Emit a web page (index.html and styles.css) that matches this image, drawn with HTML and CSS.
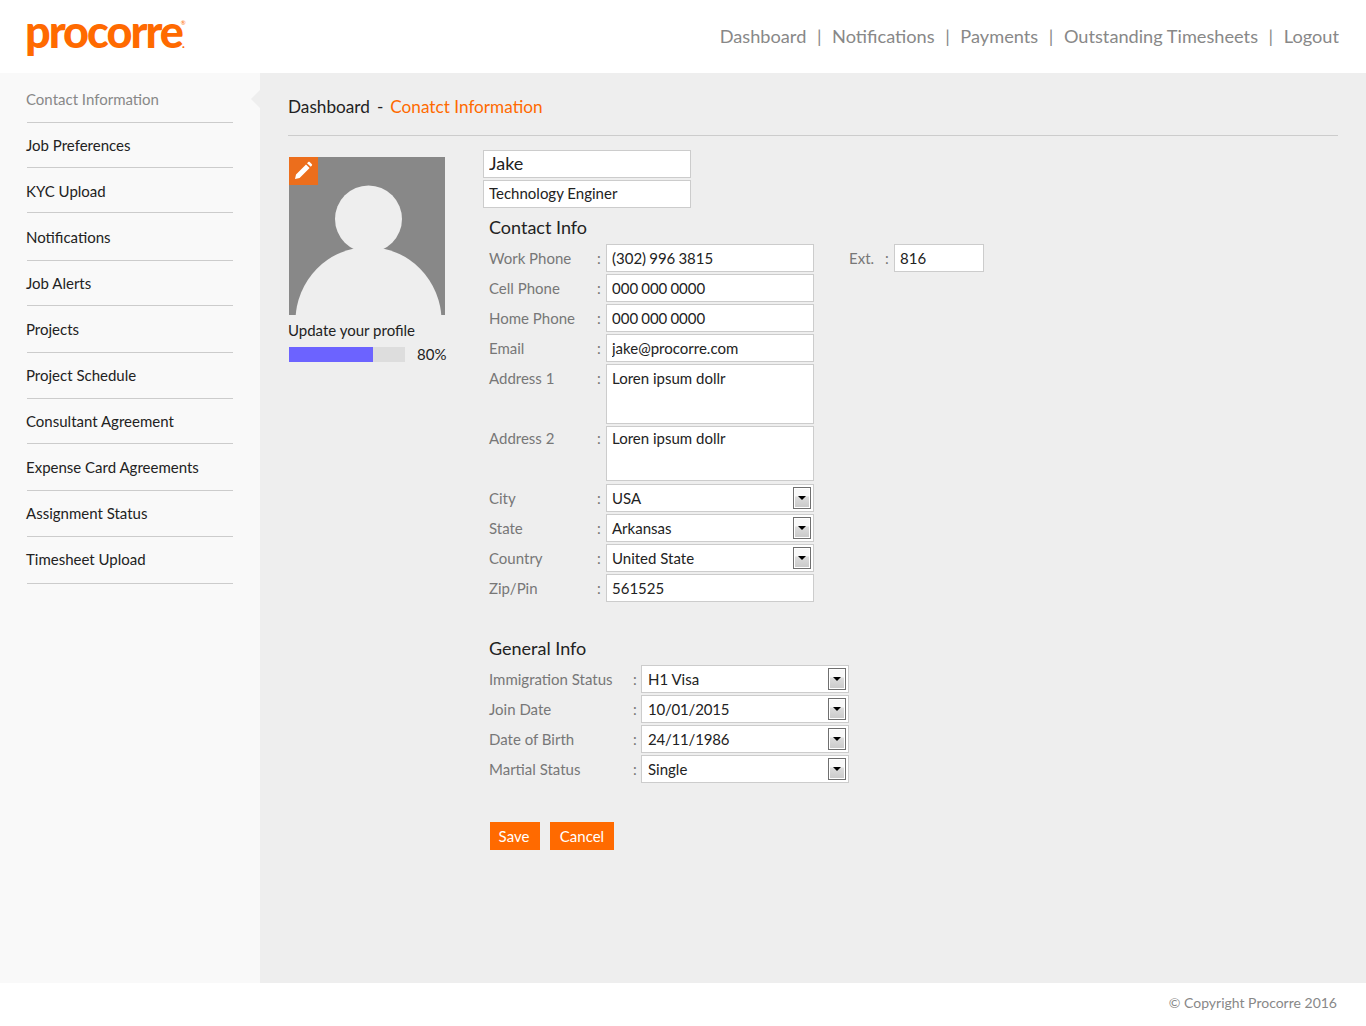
FILE: index.html
```html
<!DOCTYPE html>
<html lang="en">
<head>
<meta charset="utf-8">
<title>Procorre - Contact Information</title>
<link rel="stylesheet" href="styles.css">
</head>
<body>
<header class="topbar">
  <a class="logo" href="#">procorre<span class="logo-dot">.</span><span class="logo-reg">®</span></a>
  <nav class="topnav">
    <a href="#">Dashboard</a><span class="sep">|</span>
    <a href="#">Notifications</a><span class="sep">|</span>
    <a href="#">Payments</a><span class="sep">|</span>
    <a href="#">Outstanding Timesheets</a><span class="sep">|</span>
    <a href="#">Logout</a>
  </nav>
</header>
<div class="shell">
  <aside class="sidebar">
    <ul class="menu">
      <li class="menu-item active"><a href="#">Contact Information</a><i class="rule"></i></li>
      <li class="menu-item"><a href="#">Job Preferences</a><i class="rule g11"></i></li>
      <li class="menu-item"><a href="#">KYC Upload</a><i class="rule g10"></i></li>
      <li class="menu-item"><a href="#">Notifications</a><i class="rule"></i></li>
      <li class="menu-item"><a href="#">Job Alerts</a><i class="rule g11"></i></li>
      <li class="menu-item"><a href="#">Projects</a><i class="rule"></i></li>
      <li class="menu-item"><a href="#">Project Schedule</a><i class="rule"></i></li>
      <li class="menu-item"><a href="#">Consultant Agreement</a><i class="rule g11"></i></li>
      <li class="menu-item"><a href="#">Expense Card Agreements</a><i class="rule"></i></li>
      <li class="menu-item"><a href="#">Assignment Status</a><i class="rule"></i></li>
      <li class="menu-item"><a href="#">Timesheet Upload</a><i class="rule g13"></i></li>
    </ul>
  </aside>
  <main class="content">
    <div class="crumbs"><span>Dashboard</span><span class="crumb-dash">-</span><span class="crumb-current">Conatct Information</span></div>
    <div class="columns">
      <section class="profile">
        <div class="avatar">
          <svg class="avatar-img" viewBox="0 0 156 158" width="156" height="158">
            <rect width="156" height="158" fill="#888888"/>
            <ellipse cx="79.5" cy="164" rx="73" ry="74" fill="#eeeeee"/>
            <circle cx="79.5" cy="62" r="33.5" fill="#eeeeee"/>
          </svg>
          <a class="edit" href="#">
            <svg viewBox="0 0 29 28" width="29" height="28"><path d="M6 22l1-4.6L17 7.4l3.6 3.6L10.6 21z M18 6.2l1.3-1.2c.4-.4 1-.4 1.4 0l2.2 2.2c.4.4.4 1 0 1.4L21.8 9.8z" fill="#ffffff"/></svg>
          </a>
        </div>
        <p class="profile-title">Update your profile</p>
        <div class="progress-row">
          <div class="progress"><div class="progress-fill" style="width:72.4%"></div></div>
          <span class="progress-val">80%</span>
        </div>
      </section>
      <form class="details">
        <input class="field name" value="Jake">
        <input class="field title" value="Technology Enginer">
        <h2 class="section-title first">Contact Info</h2>
        <div class="rows contact">
          <div class="row">
            <label>Work Phone</label><span class="colon">:</span><input class="field phone" value="(302) 996 3815">
            <label class="ext-label">Ext.</label><span class="colon ext-colon">:</span><input class="field ext" value="816">
          </div>
          <div class="row"><label>Cell Phone</label><span class="colon">:</span><input class="field phone" value="000 000 0000"></div>
          <div class="row"><label>Home Phone</label><span class="colon">:</span><input class="field phone" value="000 000 0000"></div>
          <div class="row"><label>Email</label><span class="colon">:</span><input class="field" value="jake@procorre.com"></div>
          <div class="row"><label>Address 1</label><span class="colon">:</span><textarea class="field area-1">Loren ipsum dollr</textarea></div>
          <div class="row addr2"><label>Address 2</label><span class="colon">:</span><textarea class="field area-2">Loren ipsum dollr</textarea></div>
          <div class="row"><label>City</label><span class="colon">:</span><div class="select"><div class="field">USA</div><i class="arrow"></i></div></div>
          <div class="row"><label>State</label><span class="colon">:</span><div class="select"><div class="field">Arkansas</div><i class="arrow"></i></div></div>
          <div class="row"><label>Country</label><span class="colon">:</span><div class="select"><div class="field">United State</div><i class="arrow"></i></div></div>
          <div class="row"><label>Zip/Pin</label><span class="colon">:</span><input class="field" value="561525"></div>
        </div>
        <h2 class="section-title second">General Info</h2>
        <div class="rows general">
          <div class="row"><label>Immigration Status</label><span class="colon">:</span><div class="select"><div class="field">H1 Visa</div><i class="arrow"></i></div></div>
          <div class="row"><label>Join Date</label><span class="colon">:</span><div class="select"><div class="field date">10/01/2015</div><i class="arrow"></i></div></div>
          <div class="row"><label>Date of Birth</label><span class="colon">:</span><div class="select"><div class="field date">24/11/1986</div><i class="arrow"></i></div></div>
          <div class="row"><label>Martial Status</label><span class="colon">:</span><div class="select"><div class="field">Single</div><i class="arrow"></i></div></div>
        </div>
        <div class="actions">
          <button type="button" class="btn save">Save</button>
          <button type="button" class="btn cancel">Cancel</button>
        </div>
      </form>
    </div>
  </main>
</div>
<footer class="footer">© Copyright Procorre 2016</footer>
</body>
</html>
```
FILE: styles.css
```css
* { box-sizing: border-box; }
html, body { margin: 0; padding: 0; }
body {
  font-family: "Lato", "Liberation Sans", sans-serif;
  font-size: 15px;
  color: #222;
  background: #fff;
  width: 1366px;
  height: 1026px;
  display: flex;
  flex-direction: column;
}
a { color: inherit; text-decoration: none; }

.topbar {
  height: 73px;
  flex: none;
  display: flex;
  align-items: center;
  justify-content: space-between;
  padding: 0 27px;
  background: #fff;
}
.logo {
  font-family: "Lato", sans-serif;
  font-weight: 900;
  font-size: 45px;
  line-height: 73px;
  letter-spacing: -2px;
  color: #ff6a00;
  position: relative;
  top: 1px;
  left: -2px;
}
.logo-dot { font-size: 12px; letter-spacing: 0; }
.logo-reg {
  position: absolute;
  right: -1px;
  top: 24px;
  font-size: 6px;
  line-height: 8px;
  letter-spacing: 0;
  font-weight: 400;
}
.topnav {
  display: flex;
  align-items: center;
  font-size: 18.2px;
  color: #888;
  font-weight: 400;
  white-space: nowrap;
  position: relative;
  top: -1px;
}
.topnav .sep { margin: 0 10.6px; }

.shell { flex: 1; display: flex; min-height: 0; }
.sidebar {
  width: 260px;
  flex: none;
  background: #f9f9f9;
  padding: 16px 27px 0 26px;
}
.menu { list-style: none; margin: 0; padding: 0; }
.menu-item { height: 46px; line-height: 20px; position: relative; }
.menu-item a { display: block; height: 20px; color: #222; }
.menu-item.active a { color: #888; }
.menu-item.active::after {
  content: "";
  position: absolute;
  right: -27px;
  top: 1px;
  border-style: solid;
  border-width: 9px 9px 9px 0;
  border-color: transparent #eeeeee transparent transparent;
}
.rule { display: block; height: 1px; margin: 13px 0 0 1px; background: #ccc; }
.rule.g10 { margin-top: 11px; }
.rule.g11 { margin-top: 12px; }
.rule.g13 { margin-top: 14px; }

.content { flex: 1; background: #eee; padding: 0 28px; min-width: 0; }
.crumbs {
  height: 63px;
  border-bottom: 1px solid #ccc;
  font-size: 17.2px;
  line-height: 67px;
  color: #222;
  display: flex;
}
.crumb-dash { margin: 0 7px; }
.crumb-current { color: #ff6a00; }
.columns { display: flex; }

.profile { width: 195px; flex: none; padding-top: 21px; }
.avatar { position: relative; width: 156px; height: 158px; margin-left: 1px; }
.avatar-img { display: block; }
.edit { position: absolute; left: 0; top: 0; width: 29px; height: 28px; background: #ec6e1c; }
.edit svg { display: block; }
.profile-title { margin: 5px 0 0; font-size: 15px; line-height: 20px; color: #222; }
.progress-row { display: flex; align-items: center; margin-top: 7px; padding-left: 1px; }
.progress { width: 116px; height: 15px; background: #ddd; }
.progress-fill { height: 100%; background: #6c63ff; }
.progress-val { margin-left: 12px; font-size: 15px; line-height: 15px; color: #222; }

.details { padding-top: 14px; flex: 1; display: flex; flex-direction: column; align-items: flex-start; }
.field {
  display: block;
  width: 208px;
  height: 28px;
  background: #fff;
  border: 1px solid #ccc;
  padding: 0 5px;
  margin: 0;
  font-family: inherit;
  font-size: 15px;
  line-height: 26px;
  color: #222;
  border-radius: 0;
  outline: none;
  resize: none;
}
.name { font-size: 18px; padding-bottom: 2px; }
.title { margin-top: 2px; padding-bottom: 2px; }
.phone { word-spacing: -0.75px; }
.date { letter-spacing: -0.2px; }
.section-title { font-size: 18px; font-weight: 400; line-height: 24px; margin: 0 0 0 6px; color: #222; }
.section-title.first { margin-top: 7px; }
.section-title.second { margin-top: 34px; }
.rows { display: flex; flex-direction: column; gap: 2px; padding-left: 6px; }
.rows.contact { margin-top: 5px; }
.rows.general { margin-top: 5px; }
.row { display: flex; align-items: flex-start; line-height: 28px; }
.row label { color: #777; width: 108px; flex: none; }
.general .row label { width: 144px; }
.colon { width: 9px; flex: none; color: #777; }
.general .colon { width: 8px; }
.addr2 { margin-bottom: 1px; }
.addr2 label, .addr2 .colon { margin-top: -2px; }
.area-1 { height: 60px; overflow: hidden; }
.area-2 { height: 55px; line-height: 22px; overflow: hidden; }
.row .ext-label { width: 36px; margin-left: 35px; }
.ext-colon { width: 9px; }
.field.ext { width: 90px; }
.select { position: relative; width: 208px; }
.general .field { padding-left: 6px; }
.arrow {
  position: absolute;
  right: 3px;
  top: 3px;
  width: 18px;
  height: 22px;
  border: 1px solid #6f6f6f;
  box-shadow: inset 0 0 0 1px #fff;
  background: linear-gradient(#f8f8f8 40%, #dcdcdc 45%, #c9c9c9);
}
.arrow::after {
  content: "";
  position: absolute;
  left: 4px;
  top: 8px;
  border-style: solid;
  border-width: 4px 4px 0 4px;
  border-color: #000 transparent transparent transparent;
}
.actions { display: flex; gap: 10px; margin: 39px 0 0 7px; }
.btn {
  height: 28px;
  padding: 0;
  border: none;
  background: #ff6a00;
  color: #fff;
  font-family: inherit;
  font-size: 15px;
}
.save { width: 50px; padding-right: 2px; }
.cancel { width: 64px; }

.footer {
  height: 43px;
  flex: none;
  background: #fff;
  text-align: right;
  padding-right: 29px;
  line-height: 40px;
  font-size: 14px;
  color: #888;
}
```
